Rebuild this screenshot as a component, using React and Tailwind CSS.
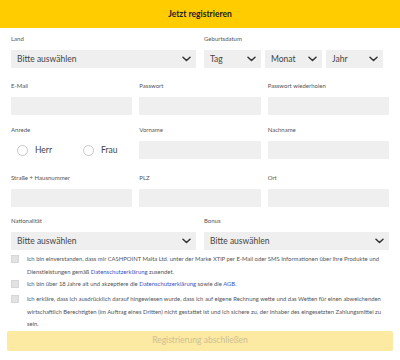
import React from "react";

const font = { fontFamily: "Lato, 'Open Sans', sans-serif" };

function Chevron() {
  return (
    <svg width="9" height="6" viewBox="0 0 9 6" className="shrink-0">
      <path d="M1 1.2 L4.5 4.5 L8 1.2" fill="none" stroke="#333" strokeWidth="1.5" strokeLinecap="round" strokeLinejoin="round" />
    </svg>
  );
}

function Select({ text, className = "" }) {
  return (
    <div className={"h-[18px] bg-[#efefef] flex items-center justify-between pl-[6px] pr-[5px] " + className}>
      <span className="text-[8.5px] leading-none text-[#444]">{text}</span>
      <Chevron />
    </div>
  );
}

function Input() {
  return <div className="h-[18px] bg-[#efefef]" />;
}

function Label({ children }) {
  return <div className="h-[8px] leading-[8px] text-[6px] text-[#555] mb-[7px] whitespace-nowrap">{children}</div>;
}

function Radio({ label }) {
  return (
    <div className="flex items-center">
      <div className="w-[11px] h-[11px] rounded-full border border-[#c8c8c8] bg-white" />
      <span className="ml-[7px] text-[8.5px] leading-none text-[#444]">{label}</span>
    </div>
  );
}

function Box() {
  return <div className="w-[8px] h-[8px] bg-[#e2e2e2] border border-[#d6d6d6] shrink-0 mt-[-1px]" />;
}

const Link = ({ children }) => <span className="text-[#3b52c4]">{children}</span>;

export default function App() {
  return (
    <div className="w-[400px] h-[360px] bg-white overflow-hidden" style={font}>
      <div className="h-[28px] bg-[#ffcc00] flex items-center justify-center">
        <span className="text-[8.5px] font-bold text-[#222] leading-none">Jetzt registrieren</span>
      </div>
      <div className="px-[11px]">
        {/* Row 1 */}
        <div className="mt-[7px] flex gap-[8px]">
          <div className="w-[185px]">
            <Label>Land</Label>
            <Select text="Bitte auswählen" />
          </div>
          <div className="flex-1">
            <Label>Geburtsdatum</Label>
            <div className="flex gap-[4px] w-[179px]">
              <Select text="Tag" className="flex-1" />
              <Select text="Monat" className="flex-1" />
              <Select text="Jahr" className="flex-1" />
            </div>
          </div>
        </div>
        {/* Row 2 */}
        <div className="mt-[14px] grid grid-cols-3 gap-x-[7px]">
          <div>
            <Label>E-Mail</Label>
            <Input />
          </div>
          <div>
            <Label>Passwort</Label>
            <Input />
          </div>
          <div>
            <Label>Passwort wiederholen</Label>
            <Input />
          </div>
        </div>
        {/* Row 3 */}
        <div className="mt-[11px] grid grid-cols-3 gap-x-[7px]">
          <div>
            <Label>Anrede</Label>
            <div className="h-[18px] flex items-center pl-[6px] gap-[31px]">
              <Radio label="Herr" />
              <Radio label="Frau" />
            </div>
          </div>
          <div>
            <Label>Vorname</Label>
            <Input />
          </div>
          <div>
            <Label>Nachname</Label>
            <Input />
          </div>
        </div>
        {/* Row 4 */}
        <div className="mt-[15px] grid grid-cols-3 gap-x-[7px]">
          <div>
            <Label>Straße + Hausnummer</Label>
            <Input />
          </div>
          <div>
            <Label>PLZ</Label>
            <Input />
          </div>
          <div>
            <Label>Ort</Label>
            <Input />
          </div>
        </div>
        {/* Row 5 */}
        <div className="mt-[10px] flex gap-[8px]">
          <div className="w-[185px]">
            <Label>Nationalität</Label>
            <Select text="Bitte auswählen" />
          </div>
          <div className="flex-1">
            <Label>Bonus</Label>
            <Select text="Bitte auswählen" />
          </div>
        </div>
        {/* Checkboxes */}
        <div className="mt-[3px] flex flex-col text-[5.9px] leading-[12.5px] text-[#555]">
          <div className="flex items-start gap-[8px]">
            <div className="pt-[3px]"><Box /></div>
            <p className="whitespace-nowrap">
              Ich bin einverstanden, dass mir CASHPOINT Malta Ltd. unter der Marke XTiP per E-Mail oder SMS Informationen über ihre Produkte und
              <br />
              Dienstleistungen gemäß <Link>Datenschutzerklärung</Link> zusendet.
            </p>
          </div>
          <div className="flex items-start gap-[8px]">
            <div className="pt-[3px]"><Box /></div>
            <p className="whitespace-nowrap">
              Ich bin über 18 Jahre alt und akzeptiere die <Link>Datenschutzerklärung</Link> sowie die <Link>AGB</Link>.
            </p>
          </div>
          <div className="mt-[2.5px] flex items-start gap-[8px]">
            <div className="pt-[3px]"><Box /></div>
            <p className="whitespace-nowrap">
              Ich erkläre, dass ich ausdrücklich darauf hingewiesen wurde, dass ich auf eigene Rechnung wette und das Wetten für einen abweichenden
              <br />
              wirtschaftlich Berechtigten (im Auftrag eines Dritten) nicht gestattet ist und ich sichere zu, der Inhaber des eingesetzten Zahlungsmittel zu
              <br />
              sein.
            </p>
          </div>
        </div>
      </div>
      <div className="px-[7px]">
        <div className="h-[20px] bg-[#fdeaa2] rounded-[2px] flex items-center justify-center">
          <span className="text-[8.5px] leading-none text-[#cbbf95]">Registrierung abschließen</span>
        </div>
      </div>
    </div>
  );
}
